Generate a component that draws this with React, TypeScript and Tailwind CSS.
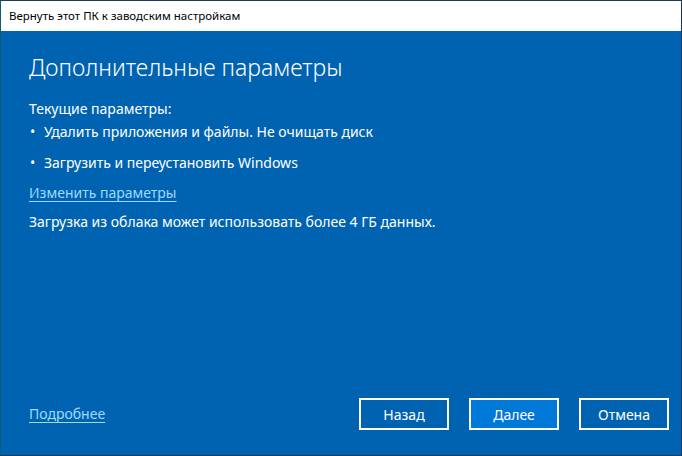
export default function App() {
  const font = { fontFamily: '"Segoe UI", "Noto Sans", "Open Sans", sans-serif' };
  return (
    <div
      className="w-[682px] h-[456px] flex flex-col border border-[#1c3a58] border-l-[#0d5d70] bg-[#0063b1] overflow-hidden"
      style={font}
    >
      <div className="h-[30px] shrink-0 bg-white flex items-center pl-[8px] text-[11.5px] text-black">
        Вернуть этот ПК к заводским настройкам
      </div>
      <div className="flex-1 flex flex-col px-[28px] text-white">
        <h1 className="mt-[19px] text-[23px] font-light leading-[34px]">Дополнительные параметры</h1>
        <div className="mt-[15px] text-[14px] leading-[20px]">Текущие параметры:</div>
        <ul className="mt-[3px] text-[14px] leading-[20px] flex flex-col gap-[11px]">
          <li className="flex items-center">
            <span className="w-[15px] pl-[1px]">•</span>
            <span>Удалить приложения и файлы. Не очищать диск</span>
          </li>
          <li className="flex items-center">
            <span className="w-[15px] pl-[1px]">•</span>
            <span>Загрузить и переустановить Windows</span>
          </li>
        </ul>
        <a className="mt-[10px] self-start text-[14px] leading-[20px] text-[#9fd9ff] underline underline-offset-[3px]">
          Изменить параметры
        </a>
        <div className="mt-[9px] text-[14px] leading-[20px]">
          Загрузка из облака может использовать более 4 ГБ данных.
        </div>
        <div className="mt-auto mb-[25px] flex items-center justify-between">
          <a className="text-[14px] leading-[20px] text-[#9fd9ff] underline underline-offset-[3px]">Подробнее</a>
          <div className="flex gap-[20px] mr-[-16px]">
            <button className="w-[90px] h-[32px] border-2 border-white text-[14px] text-white">Назад</button>
            <button className="w-[90px] h-[32px] border-2 border-white bg-[#0078d7] text-[14px] text-white">Далее</button>
            <button className="w-[90px] h-[32px] border-2 border-white text-[14px] text-white">Отмена</button>
          </div>
        </div>
      </div>
    </div>
  );
}
